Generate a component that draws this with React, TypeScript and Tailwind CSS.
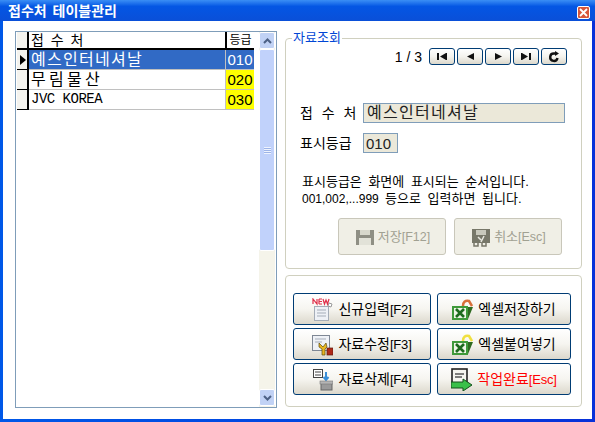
import React from "react";

const font = { fontFamily: '"Liberation Sans", "Noto Sans CJK KR", sans-serif' };

function NavBtn({ children }: { children: React.ReactNode }) {
  return (
    <div className="flex h-[17px] w-[26px] items-center justify-center rounded-[3px] border border-[#003c74] bg-gradient-to-b from-white via-[#f4f3ee] to-[#dcd8cc]">
      {children}
    </div>
  );
}

function BigBtn({ icon, label, keyName, red, wide }: { icon: React.ReactNode; label: string; keyName?: string; red?: boolean; wide?: boolean }) {
  return (
    <div className={`flex h-[32px] items-center justify-center gap-[5px] rounded-[3px] border border-[#003c74] bg-gradient-to-b from-white via-[#f6f5f0] to-[#dcd8cc] ${wide ? "w-[138px]" : "w-[134px]"}`}>
      <span className="h-[23px] w-[21px] shrink-0">{icon}</span>
      <span className={`whitespace-nowrap text-[14px] leading-none ${red ? "text-[#ff0000]" : "text-black"}`}>
        {label}
        {keyName && <span className="text-[13px] tracking-[-0.2px]">{keyName}</span>}
      </span>
    </div>
  );
}

const ExcelIcon = ({ arc }: { arc: string }) => (
  <svg viewBox="0 0 21 23" className="h-full w-full">
    <path d="M11 8 Q11 2 17 3 L20 8" fill="none" stroke={arc} strokeWidth="2.5" />
    <path d="M0 8 H16 V22 H0 Z" fill="#3f9a3a" />
    <rect x="2" y="10" width="12" height="10" fill="#eef5e6" />
    <path d="M16 9 H21 L16 21 Z" fill="#2f6a20" />
    <path d="M4 11 L12 19 M12 11 L4 19" stroke="#1d6b1d" strokeWidth="2.6" />
  </svg>
);

const NewIcon = () => (
  <svg viewBox="0 0 21 23" className="h-full w-full">
    <rect x="2.5" y="8.5" width="14" height="14" fill="#eef1f6" stroke="#a5adb8" />
    <path d="M5 12 H14 M5 15 H14 M5 18 H14" stroke="#a5adb8" />
    <path d="M17 5 l3 1 -1 3 -3 -1 z" fill="#fff" stroke="#999" />
    <path d="M1 6 V1 L5 6 V1 M7 1 V6 M7 1 H10 M7 3.5 H10 M7 6 H10 M11 1 L12.5 6 L14 2 L15.5 6 L17 1" fill="none" stroke="#e0304a" strokeWidth="1.2" />
  </svg>
);

const EditIcon = () => (
  <svg viewBox="0 0 21 23" className="h-full w-full">
    <rect x="0.5" y="2.5" width="17" height="15" fill="#eef1f6" stroke="#7e8794" />
    <path d="M3 6 H14 M3 9 H10" stroke="#a5adb8" />
    <path d="M7 10 l4 4 3 -4 1 4 -2 2 v6 h-3 v-6 l-3 -2 z" fill="#e8b520" stroke="#5a4a10" strokeWidth="0.7" />
    <rect x="15" y="15" width="6" height="7" fill="#b02a18" stroke="#5c1a10" strokeWidth="0.7" />
  </svg>
);

const DeleteIcon = () => (
  <svg viewBox="0 0 21 23" className="h-full w-full">
    <rect x="1.5" y="1.5" width="9" height="8" fill="#fff" stroke="#444" />
    <path d="M3 4 H9 M3 7 H9" stroke="#444" />
    <path d="M14 4 V11 M11.5 9 L14 12 L16.5 9" fill="none" stroke="#3a8fd8" strokeWidth="2" />
    <rect x="9" y="15" width="11" height="7" fill="#9a9a9a" stroke="#666" />
    <rect x="8" y="13" width="13" height="3" fill="#b5b5b5" stroke="#777" strokeWidth="0.6" />
  </svg>
);

const DoneIcon = () => (
  <svg viewBox="0 0 21 23" className="h-full w-full">
    <rect x="1" y="1" width="15" height="17" fill="#f5f5f0" stroke="#222" strokeWidth="1.6" />
    <path d="M4 6 H13 M4 9 H11" stroke="#555" strokeWidth="1.4" />
    <path d="M0 14 H12 V11 L21 17 L12 23 V20 H0 Z" fill="#39c04a" stroke="#14501c" />
  </svg>
);

const DisabledBtn = ({ icon, label, keyName }: { icon: React.ReactNode; label: string; keyName: string }) => (
  <div className="flex h-[37px] w-[108px] items-center justify-center gap-[2px] rounded-[3px] border border-[#c9c7ba] bg-[#f0efe6]">
    <span className="h-[20px] w-[22px]">{icon}</span>
    <span className="whitespace-nowrap text-[13px] leading-none text-[#a1a192]">
      {label}
      <span className="text-[12.5px]">{keyName}</span>
    </span>
  </div>
);

export default function App() {
  const rows = [
    { name: "예스인터네셔날", grade: "010", selected: true, cls: "text-[16px] tracking-[1.3px] leading-[19px]" },
    { name: "무림물산", grade: "020", cls: "text-[16px] tracking-[3.3px] leading-[19px]" },
    { name: "JVC KOREA", grade: "030", cls: "font-['Liberation_Mono'] text-[14px] tracking-[-0.5px] leading-[19px]" },
  ];
  return (
    <div style={font} className="flex h-[422px] w-[595px] flex-col overflow-hidden bg-gradient-to-r from-[#0058e8] to-[#0831d9] text-black">
      <div className="flex h-[21px] shrink-0 justify-between bg-gradient-to-b from-[#3a8ef5] via-[#0456e4] via-[30%] to-[#0a4fd8] pl-[8px] pr-[5px]">
        <span className="self-center text-[14px] font-bold leading-none text-white [word-spacing:2px]">접수처 테이블관리</span>
        <div className="mt-[6px] flex h-[13px] w-[13px] items-center justify-center rounded-[2px] border border-white bg-[#d8563a]">
          <svg viewBox="0 0 9 9" className="h-[9px] w-[9px]">
            <path d="M1 1 L8 8 M8 1 L1 8" stroke="#fff" strokeWidth="1.8" />
          </svg>
        </div>
      </div>
      <div className="mx-[3px] mb-[3px] flex flex-1 gap-[8px] bg-white pl-[12px] pt-[10px]">
        {/* list */}
        <div className="flex h-[377px] w-[262px] shrink-0 border border-[#7f9db9] pl-[1px]">
          <div className="flex w-[237px] flex-col">
            <div className="flex h-[18px]">
              <div className="w-[12px] border-b-2 border-r-2 border-black bg-[#f4f3ee]" />
              <div className="w-[196px] whitespace-nowrap border-b-2 border-black pl-[2px] text-[14px] leading-[16px] [word-spacing:3px]">접 수 처</div>
              <div className="w-[29px] border-b-2 border-l-2 border-black text-center text-[12px] leading-[16px]">등급</div>
            </div>
            {rows.map((r, i) => (
              <div key={i} className="flex h-[20px]">
                <div className="flex w-[12px] items-center border-b border-r-2 border-black bg-[#f4f3ee]">
                  {r.selected && <div className="ml-[3px] h-0 w-0 border-y-[5px] border-l-[6px] border-y-transparent border-l-black" />}
                </div>
                <div className={`w-[196px] whitespace-nowrap border-b border-[#c0c0c0] pl-[2px] ${r.cls} ${r.selected ? "bg-[#316ac5] text-white" : ""}`}>
                  {r.name}
                </div>
                <div className={`w-[29px] border-b border-l border-[#c0c0c0] text-center text-[15px] leading-[19px] ${r.selected ? "bg-[#316ac5] text-white" : "bg-[#ffff00]"}`}>
                  {r.grade}
                </div>
              </div>
            ))}
          </div>
          <div className="ml-[5px] flex w-[16px] flex-col bg-[#f5f4ea]">
            <div className="flex h-[17px] items-center justify-center rounded-[2px] border border-white bg-[#c1d2f5]">
              <svg viewBox="0 0 9 6" className="h-[6px] w-[9px]"><path d="M1 5 L4.5 1.5 L8 5" fill="none" stroke="#4d6185" strokeWidth="2" /></svg>
            </div>
            <div className="flex h-[202px] items-center justify-center rounded-[2px] border border-white bg-[#c1d2fb]">
              <div className="h-[7px] w-[7px] bg-[repeating-linear-gradient(180deg,#eef3fe_0_1px,#9db4e8_1px_2px)]" />
            </div>
            <div className="flex-1" />
            <div className="mb-[1px] flex h-[17px] items-center justify-center rounded-[2px] border border-white bg-[#c1d2f5]">
              <svg viewBox="0 0 9 6" className="h-[6px] w-[9px]"><path d="M1 1 L4.5 4.5 L8 1" fill="none" stroke="#4d6185" strokeWidth="2" /></svg>
            </div>
          </div>
        </div>
        {/* right */}
        <div className="flex w-[297px] flex-col pt-[7px]">
          <div className="relative h-[231px] rounded-[4px] border border-[#d0d0bf] px-[14px] pt-[9px]">
            <span className="absolute left-[6px] top-[-9px] bg-white px-[1px] text-[13px] leading-[16px] text-[#0046d5]">자료조회</span>
            <div className="flex items-center justify-end gap-[2px]">
              <span className="mr-[5px] text-[14px] leading-none">1 / 3</span>
              <NavBtn><svg viewBox="0 0 12 9" className="h-[9px] w-[12px]"><path d="M1 1 H3 V8 H1 Z M11 1 V8 H10 L4 4.5 L10 1 Z" fill="#111" /></svg></NavBtn>
              <NavBtn><svg viewBox="0 0 9 9" className="h-[9px] w-[9px]"><path d="M8 1 V8 L1 4.5 Z" fill="#111" /></svg></NavBtn>
              <NavBtn><svg viewBox="0 0 9 9" className="h-[9px] w-[9px]"><path d="M1 1 V8 L8 4.5 Z" fill="#111" /></svg></NavBtn>
              <NavBtn><svg viewBox="0 0 12 9" className="h-[9px] w-[12px]"><path d="M11 1 H9 V8 H11 Z M1 1 V8 H2 L8 4.5 L2 1 Z" fill="#111" /></svg></NavBtn>
              <NavBtn><svg viewBox="0 0 12 12" className="h-[12px] w-[12px]"><path d="M9.5 7 A3.7 3.7 0 1 1 6 2.5 H8" fill="none" stroke="#111" strokeWidth="2.4" /><path d="M7 0 L11 2.5 L7 5 Z" fill="#111" /></svg></NavBtn>
            </div>
            <div className="mt-[38px] flex h-[20px] items-center">
              <span className="w-[63px] whitespace-nowrap text-[14px] leading-none [word-spacing:5px]">접 수 처</span>
              <div className="h-[20px] w-[202px] whitespace-nowrap border border-[#7f9db9] bg-[#ebe8d9] pl-[3px] text-[16px] leading-[18px] tracking-[1.3px] text-[#222]">예스인터네셔날</div>
            </div>
            <div className="mt-[10px] flex h-[20px] items-center">
              <span className="w-[63px] whitespace-nowrap text-[14px] leading-none">표시등급</span>
              <div className="h-[20px] w-[35px] border border-[#7f9db9] bg-[#ebe8d9] pl-[2px] text-[15px] leading-[19px] text-[#222]">010</div>
            </div>
            <div className="mt-[20px] whitespace-nowrap pl-[2px] text-[13px] leading-[17px] [word-spacing:3px]">
              <div>표시등급은 화면에 표시되는 순서입니다.</div>
              <div><span className="text-[12px]">001,002,...999 </span>등으로 입력하면 됩니다.</div>
            </div>
            <div className="mt-[10px] flex justify-end gap-[8px] pr-[5px]">
              <DisabledBtn
                label="저장"
                keyName="[F12]"
                icon={<svg viewBox="0 0 22 20" className="h-full w-full"><path d="M2 3 H20 V18 H2 Z" fill="#8f8f84" /><rect x="6" y="3" width="10" height="5" fill="#d8d8cc" /><rect x="5" y="11" width="12" height="7" fill="#e2e2d8" /></svg>}
              />
              <DisabledBtn
                label="취소"
                keyName="[Esc]"
                icon={<svg viewBox="0 0 22 20" className="h-full w-full"><path d="M2 2 H20 V16 H2 Z" fill="#777769" /><rect x="6" y="3" width="10" height="5" fill="#c8c8bc" /><path d="M8 10 l3 3 M14 9 l-3 6" stroke="#e8e8e0" strokeWidth="1.5" /><path d="M4 16 v3 h4 v-3 M12 16 v3 h4 v-3" fill="none" stroke="#777769" strokeWidth="1.5" /></svg>}
              />
            </div>
          </div>
          <div className="mt-[6px] flex h-[132px] gap-[6px] rounded-[4px] border border-[#d0d0bf] pl-[7px] pt-[17px]">
            <div className="flex flex-col gap-[3px]">
              <BigBtn wide icon={<NewIcon />} label="신규입력" keyName="[F2]" />
              <BigBtn wide icon={<EditIcon />} label="자료수정" keyName="[F3]" />
              <BigBtn wide icon={<DeleteIcon />} label="자료삭제" keyName="[F4]" />
            </div>
            <div className="flex flex-col gap-[3px]">
              <BigBtn icon={<ExcelIcon arc="#d8703a" />} label="엑셀저장하기" />
              <BigBtn icon={<ExcelIcon arc="#f0e040" />} label="엑셀붙여넣기" />
              <BigBtn icon={<DoneIcon />} label="작업완료" keyName="[Esc]" red />
            </div>
          </div>
        </div>
      </div>
    </div>
  );
}
